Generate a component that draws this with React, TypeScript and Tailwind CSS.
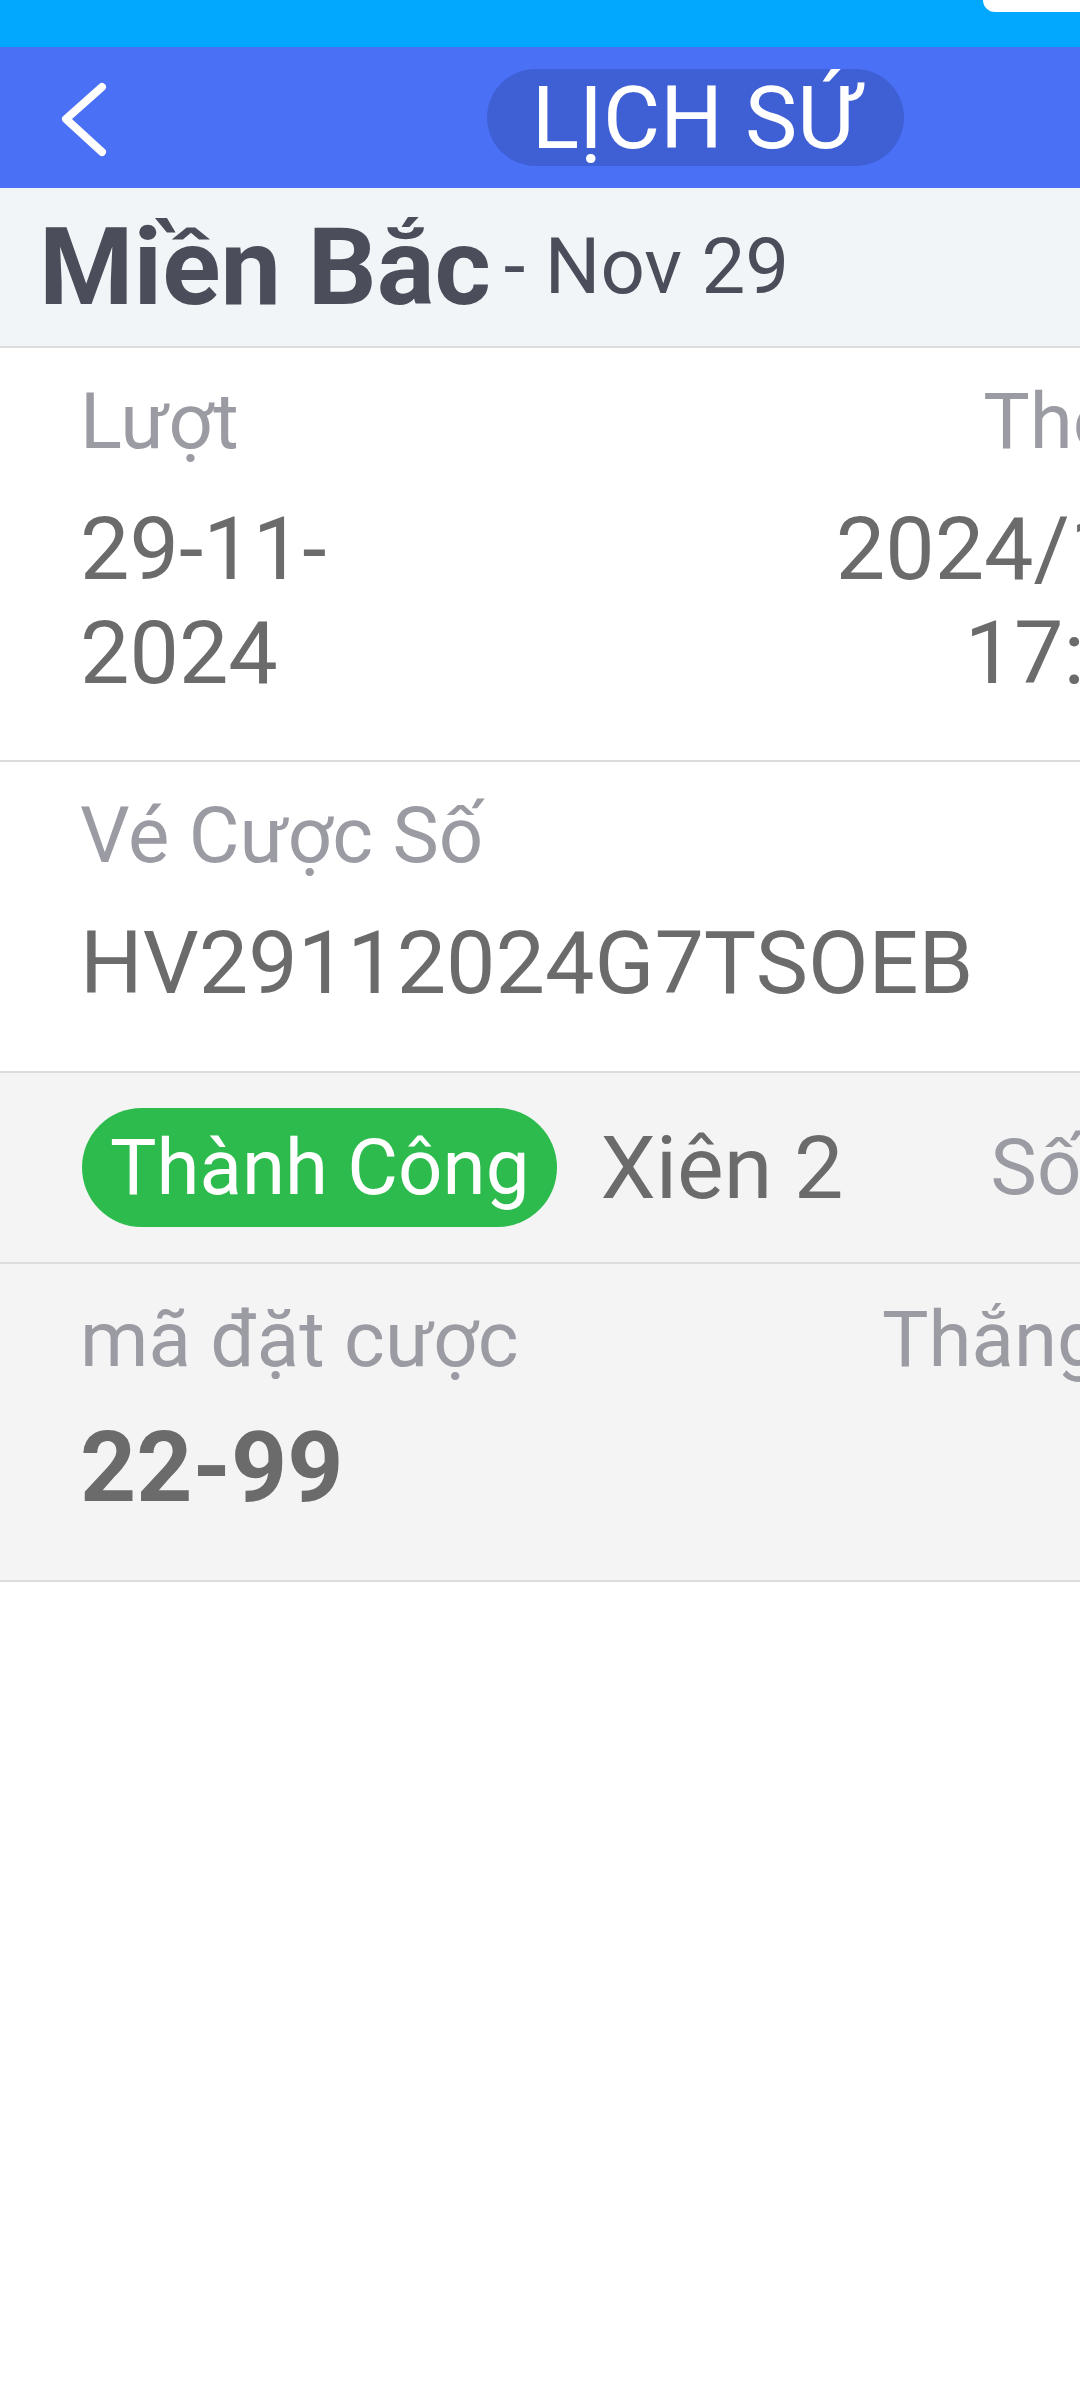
// Bet history detail screen (page renders wider than the viewport and is clipped on the right)
export default function App() {
  return (
    <div className="relative min-h-[2400px] w-[1080px] overflow-hidden whitespace-nowrap bg-white font-['Roboto','Noto_Sans',sans-serif]">
      {/* notch piece over the status bar */}
      <div className="absolute right-0 top-0 z-10 h-[12px] w-[97px] rounded-bl-[14px] bg-white" />

      <div className="w-[1390px]">
        {/* status bar */}
        <div className="h-[47px] bg-[#02a8fe]" />

        {/* header */}
        <header className="grid h-[141px] grid-cols-[1fr_auto_1fr] items-center bg-[#4a70f6]">
          <div className="pl-[56px]">
            <svg width="56" height="80" viewBox="0 0 56 80" fill="none">
              <path
                d="M46 9 L10 41 L46 74"
                stroke="white"
                strokeWidth="8"
                strokeLinecap="round"
                strokeLinejoin="round"
              />
            </svg>
          </div>
          <div className="flex h-[97px] w-[417px] items-center justify-center rounded-full bg-[#3f5fd4] text-[88px] leading-none text-white">
            LỊCH SỨ
          </div>
          <div />
        </header>

        {/* region / date */}
        <div className="flex h-[160px] items-center border-b-2 border-[#dcdcdc] bg-[#f2f5f7] pl-[39px] text-[#4b4e5a]">
          <span className="text-[108px] font-bold leading-none">Miền Bắc</span>
          <span className="ml-[13px] text-[78px] leading-none">- Nov 29</span>
        </div>

        {/* round + time */}
        <div className="flex justify-between border-b-2 border-[#dcdcdc] bg-white pb-[55px] pl-[80px] pr-[86px] pt-[28px]">
          <div className="shrink-0">
            <div className="text-[78px] leading-[91px] text-[#9b9ba3]">Lượt</div>
            <div className="mt-[30px] text-[88px] leading-[104px] text-[#6b6b6b]">
              <div>29-11-</div>
              <div>2024</div>
            </div>
          </div>
          <div className="shrink-0 text-right">
            <div className="text-[78px] leading-[91px] text-[#9b9ba3]">Thời gian</div>
            <div className="mt-[30px] text-[88px] leading-[104px] text-[#6b6b6b]">
              <div>2024/11/29</div>
              <div>17:25:43</div>
            </div>
          </div>
        </div>

        {/* ticket number */}
        <div className="border-b-2 border-[#dcdcdc] bg-white pb-[56px] pl-[80px] pt-[28px]">
          <div className="text-[78px] leading-[91px] text-[#9b9ba3]">Vé Cược Số</div>
          <div className="mt-[30px] text-[88px] leading-[104px] text-[#6b6b6b]">HV29112024G7TSOEB</div>
        </div>

        {/* status row */}
        <div className="flex items-center border-b-2 border-[#dcdcdc] bg-[#f4f4f4] py-[35px] pl-[82px]">
          <div className="flex h-[119px] shrink-0 items-center rounded-full bg-[#2cbb4c] px-[28px] text-[78px] leading-none text-white">
            Thành Công
          </div>
          <div className="ml-[43px] shrink-0 text-[88px] leading-none text-[#6b6b6b]">Xiên 2</div>
          <div className="ml-[147px] shrink-0 text-[78px] leading-none text-[#9b9ba3]">Số tiền cược</div>
        </div>

        {/* bet code */}
        <div className="flex border-b-2 border-[#dcdcdc] bg-[#f4f4f4] pb-[55px] pl-[80px] pt-[30px]">
          <div className="w-[802px] shrink-0">
            <div className="text-[78px] leading-[91px] text-[#9b9ba3]">mã đặt cược</div>
            <div className="mt-[25px] text-[98px] font-bold leading-[115px] text-[#6b6b6b]">22-99</div>
          </div>
          <div className="shrink-0 text-[78px] leading-[91px] text-[#9b9ba3]">Thắng cược</div>
        </div>
      </div>
    </div>
  );
}
